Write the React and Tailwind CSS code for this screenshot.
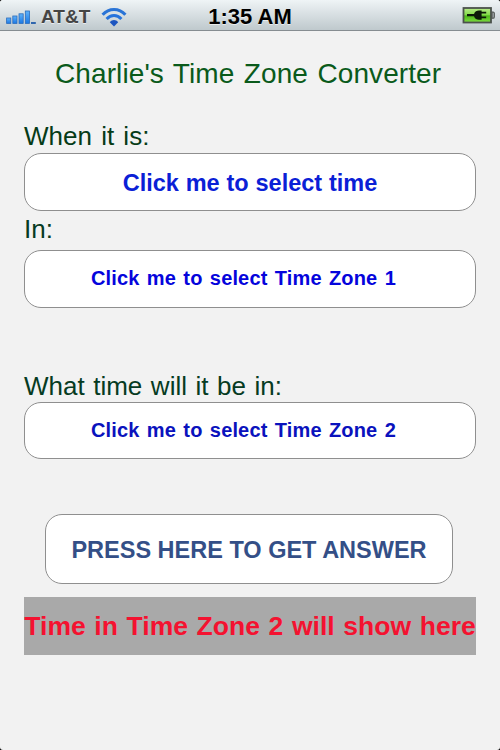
import React from 'react';

const SignalIcon = () => (
    <svg width="30" height="14" viewBox="0 0 30 14" className="block">
        <defs>
            <linearGradient id="signal" x1="0" y1="0" x2="0" y2="1">
                <stop offset="0" stopColor="#5fb2fa" />
                <stop offset="1" stopColor="#1a78e4" />
            </linearGradient>
        </defs>
        <rect x="0.6" y="8" width="4.2" height="5.4" fill="url(#signal)" stroke="#2a6cbc" strokeWidth="0.8" />
        <rect x="6.8" y="6" width="4.2" height="7.4" fill="url(#signal)" stroke="#2a6cbc" strokeWidth="0.8" />
        <rect x="13" y="3.8" width="4.2" height="9.6" fill="url(#signal)" stroke="#2a6cbc" strokeWidth="0.8" />
        <rect x="19.3" y="1" width="4.2" height="12.4" fill="url(#signal)" stroke="#2a6cbc" strokeWidth="0.8" />
        <rect x="25" y="12" width="4.8" height="2" fill="#2f66ad" />
    </svg>
);

const WifiIcon = () => (
    <svg width="26" height="20" viewBox="0 0 26 20" className="block" fill="none">
        <path d="M1.6 7.8 C8 0.7 18 0.7 24.4 7.8" stroke="#2a74d6" strokeWidth="3.1" />
        <path d="M5.6 12 C10 7.3 16 7.3 20.4 12" stroke="#2573dc" strokeWidth="3" />
        <path d="M13 19.4 L8.8 15.2 C11 12.4 15 12.4 17.2 15.2 Z" fill="#1c55c0" />
    </svg>
);

const BatteryIcon = () => (
    <svg width="34" height="18" viewBox="0 0 34 18" className="block">
        <defs>
            <linearGradient id="battery" x1="0" y1="0" x2="0" y2="1">
                <stop offset="0" stopColor="#b9ec8c" />
                <stop offset="0.45" stopColor="#86dc4c" />
                <stop offset="0.55" stopColor="#4fb81a" />
                <stop offset="1" stopColor="#7ede42" />
            </linearGradient>
        </defs>
        <rect x="1.5" y="1" width="27.5" height="14.5" fill="url(#battery)" stroke="#4b514c" strokeWidth="1.8" />
        <path d="M30 5 h1 q1.3 0 1.3 1.3 v3.6 q0 1.3 -1.3 1.3 h-1 z" fill="#a9afb4" stroke="#4b514c" strokeWidth="1.1" />
        <path
            d="M5 6.9 h7 c1 -2.6 2.6 -3.5 5 -3.5 h2.6 v1.4 h4.6 v1.8 h-4.6 v2.9 h4.6 v1.8 h-4.6 v1.4 h-2.6 c-2.4 0 -4 -0.9 -5 -3.5 h-7 z"
            fill="#0c1a08"
        />
    </svg>
);

const StatusBar = () => (
    <header className="grid h-[31px] grid-cols-3 items-center border-b border-[#868d91] bg-gradient-to-b from-[#eff4f6] to-[#bfc9cd]">
        <div className="flex h-full items-center">
            <div className="ml-[6px] pt-[2px]">
                <SignalIcon />
            </div>
            <span className="ml-[5px] w-[51px] pt-[2px] text-[19px] leading-[30px] font-bold text-[#454545] [text-shadow:0_1px_0_rgba(255,255,255,0.6)]">
                AT&amp;T
            </span>
            <div className="ml-[9px] pt-px">
                <WifiIcon />
            </div>
        </div>
        <div className="pt-px text-center text-[22px] leading-[30px] font-bold text-black [text-shadow:0_1px_0_rgba(255,255,255,0.6)]">
            1:35 AM
        </div>
        <div className="flex justify-end pr-[4px]">
            <BatteryIcon />
        </div>
    </header>
);

const FieldLabel = ({ className, children }) => (
    <div className={`text-[26px] leading-[30px] ${className}`}>{children}</div>
);

const RoundButton = ({ className, children }) => (
    <button
        type="button"
        className={`flex items-center rounded-[17px] border-[1.5px] border-[#8f8f8f] bg-white font-bold whitespace-nowrap ${className}`}
    >
        {children}
    </button>
);

const App = () => {
    return (
        <div className="flex h-[750px] w-[500px] flex-col overflow-hidden bg-black font-['Liberation_Sans',Arial,sans-serif]">
            <div className="flex flex-1 flex-col overflow-hidden rounded-[3px] bg-[#f2f2f2]">
                <StatusBar />
                <main className="flex flex-col px-6">
                    <h1 className="mt-[27px] ml-[31px] text-[28px] leading-8 tracking-[0.1px] whitespace-nowrap text-[#0a5a1b] [word-spacing:1.5px]">
                        Charlie's Time Zone Converter
                    </h1>

                    <FieldLabel className="mt-[31px] text-[#063b17] [word-spacing:2px]">When it is:</FieldLabel>
                    <RoundButton className="mt-[2px] h-[58px] justify-center pt-[3px] text-[23.5px] text-[#0a20d6] [word-spacing:0.3px]">
                        Click me to select time
                    </RoundButton>

                    <FieldLabel className="mt-[3px] text-[#063b22]">In:</FieldLabel>
                    <RoundButton className="mt-[6px] h-[58px] pb-[2px] pl-[66px] text-[20px] tracking-[0.15px] text-[#0504dc] [word-spacing:1.6px]">
                        Click me to select Time Zone 1
                    </RoundButton>

                    <FieldLabel className="mt-[63px] text-[#063b22] [word-spacing:1.3px]">What time will it be in:</FieldLabel>
                    <RoundButton className="mt-px h-[57px] pb-[2px] pl-[66px] text-[20px] tracking-[0.15px] text-[#0a12bd] [word-spacing:1.6px]">
                        Click me to select Time Zone 2
                    </RoundButton>

                    <RoundButton className="mr-[23px] ml-[21px] mt-[55px] h-[70px] justify-center pt-[3px] text-[23.5px] text-[#344f87]">
                        PRESS HERE TO GET ANSWER
                    </RoundButton>

                    <div className="mt-[13px] flex h-[58px] items-center justify-center bg-[#a9a9a9] pt-[2px] text-[26.5px] font-bold whitespace-nowrap text-[#f41230] [word-spacing:1.3px]">
                        Time in Time Zone 2 will show here
                    </div>
                </main>
            </div>
        </div>
    );
};

export default App;
